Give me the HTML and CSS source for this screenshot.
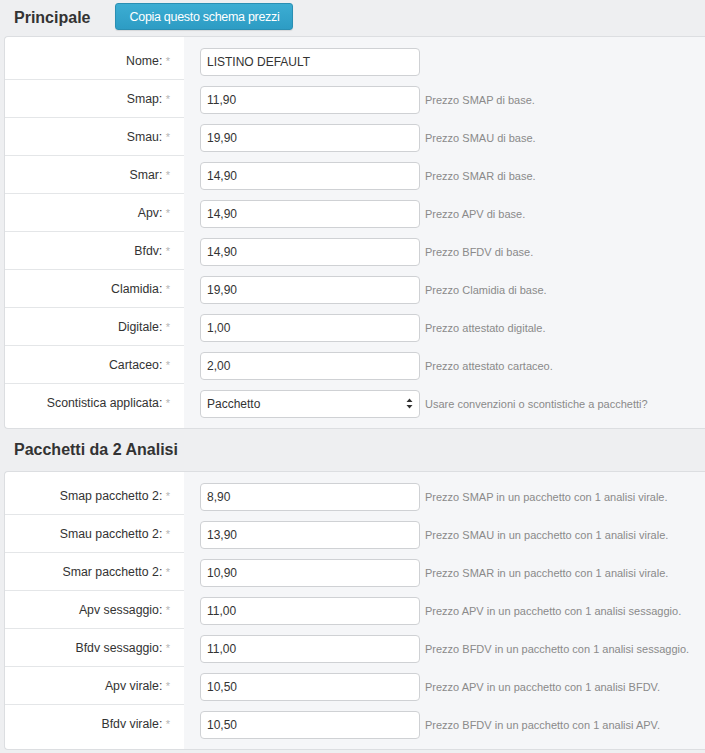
FILE: index.html
```html
<!DOCTYPE html>
<html lang="it">
<head>
<meta charset="utf-8">
<title>Schema prezzi</title>
<link rel="stylesheet" href="styles.css">
</head>
<body>
<div class="section-head">
  <h2>Principale</h2>
  <button class="btn-copy" type="button">Copia questo schema prezzi</button>
</div>
<div class="panel">
  <div class="row"><label class="lbl">Nome: <span class="req">*</span></label><div class="fld"><input class="inp" value="LISTINO DEFAULT"></div></div>
  <div class="row"><label class="lbl">Smap: <span class="req">*</span></label><div class="fld"><input class="inp" value="11,90"><span class="help">Prezzo SMAP di base.</span></div></div>
  <div class="row"><label class="lbl">Smau: <span class="req">*</span></label><div class="fld"><input class="inp" value="19,90"><span class="help">Prezzo SMAU di base.</span></div></div>
  <div class="row"><label class="lbl">Smar: <span class="req">*</span></label><div class="fld"><input class="inp" value="14,90"><span class="help">Prezzo SMAR di base.</span></div></div>
  <div class="row"><label class="lbl">Apv: <span class="req">*</span></label><div class="fld"><input class="inp" value="14,90"><span class="help">Prezzo APV di base.</span></div></div>
  <div class="row"><label class="lbl">Bfdv: <span class="req">*</span></label><div class="fld"><input class="inp" value="14,90"><span class="help">Prezzo BFDV di base.</span></div></div>
  <div class="row"><label class="lbl">Clamidia: <span class="req">*</span></label><div class="fld"><input class="inp" value="19,90"><span class="help">Prezzo Clamidia di base.</span></div></div>
  <div class="row"><label class="lbl">Digitale: <span class="req">*</span></label><div class="fld"><input class="inp" value="1,00"><span class="help">Prezzo attestato digitale.</span></div></div>
  <div class="row"><label class="lbl">Cartaceo: <span class="req">*</span></label><div class="fld"><input class="inp" value="2,00"><span class="help">Prezzo attestato cartaceo.</span></div></div>
  <div class="row"><label class="lbl">Scontistica applicata: <span class="req">*</span></label><div class="fld"><div class="sel"><span>Pacchetto</span><svg class="arrows" width="7" height="11" viewBox="0 0 7 11"><path d="M3.5 0.5 L6.5 4 L0.5 4 Z M3.5 10.5 L6.5 7 L0.5 7 Z" fill="#333"/></svg></div><span class="help">Usare convenzioni o scontistiche a pacchetti?</span></div></div>
</div>
<div class="section-head second">
  <h2>Pacchetti da 2 Analisi</h2>
</div>
<div class="panel">
  <div class="row"><label class="lbl">Smap pacchetto 2: <span class="req">*</span></label><div class="fld"><input class="inp" value="8,90"><span class="help">Prezzo SMAP in un pacchetto con 1 analisi virale.</span></div></div>
  <div class="row"><label class="lbl">Smau pacchetto 2: <span class="req">*</span></label><div class="fld"><input class="inp" value="13,90"><span class="help">Prezzo SMAU in un pacchetto con 1 analisi virale.</span></div></div>
  <div class="row"><label class="lbl">Smar pacchetto 2: <span class="req">*</span></label><div class="fld"><input class="inp" value="10,90"><span class="help">Prezzo SMAR in un pacchetto con 1 analisi virale.</span></div></div>
  <div class="row"><label class="lbl">Apv sessaggio: <span class="req">*</span></label><div class="fld"><input class="inp" value="11,00"><span class="help">Prezzo APV in un pacchetto con 1 analisi sessaggio.</span></div></div>
  <div class="row"><label class="lbl">Bfdv sessaggio: <span class="req">*</span></label><div class="fld"><input class="inp" value="11,00"><span class="help">Prezzo BFDV in un pacchetto con 1 analisi sessaggio.</span></div></div>
  <div class="row"><label class="lbl">Apv virale: <span class="req">*</span></label><div class="fld"><input class="inp" value="10,50"><span class="help">Prezzo APV in un pacchetto con 1 analisi BFDV.</span></div></div>
  <div class="row"><label class="lbl">Bfdv virale: <span class="req">*</span></label><div class="fld"><input class="inp" value="10,50"><span class="help">Prezzo BFDV in un pacchetto con 1 analisi APV.</span></div></div>
</div>
</body>
</html>
```
FILE: styles.css
```css
html, body {
  margin: 0;
  padding: 0;
}
body {
  background: #eeeff1;
  font-family: "Liberation Sans", Arial, sans-serif;
  color: #333;
  width: 709px;
  overflow: hidden;
}
.section-head {
  display: flex;
  align-items: center;
  height: 36px;
  padding-left: 14px;
  box-sizing: border-box;
}
.section-head.second {
  height: 42px;
  padding-top: 0;
}
.section-head h2 {
  margin: 0;
  font-size: 16px;
  font-weight: bold;
  color: #333;
}
.btn-copy {
  margin-left: 25px;
  margin-top: -3px;
  width: 178px;
  height: 27px;
  border: 1px solid #2a8fb3;
  border-radius: 3px;
  background: linear-gradient(#3cadd3, #2d9cc4);
  color: #fff;
  font-family: "Liberation Sans", Arial, sans-serif;
  font-size: 12.5px;
  letter-spacing: -0.3px;
  padding: 0;
  box-shadow: 0 1px 1px rgba(0,0,0,0.1);
}
.panel {
  margin-left: 4px;
  border: 1px solid #dcdee1;
  border-right: none;
  border-radius: 4px 0 0 4px;
  background: linear-gradient(to right, #fff 0, #fff 179px, #f5f6f8 179px);
  padding: 5px 0 6px;
}
.row {
  display: flex;
  height: 38px;
  box-sizing: border-box;
}
.row:not(:last-child) .lbl {
  border-bottom: 1px solid #e4e6e8;
}
.lbl {
  width: 179px;
  flex: none;
  box-sizing: border-box;
  text-align: right;
  padding-right: 14px;
  font-size: 12.3px;
  line-height: 38px;
  color: #333;
}
.req {
  color: #b5b5b5;
  font-size: 11px;
}
.fld {
  display: flex;
  align-items: center;
  padding-left: 16px;
  padding-top: 1px;
}
.inp, .sel {
  width: 220px;
  height: 28px;
  box-sizing: border-box;
  border: 1px solid #cfd1d4;
  border-radius: 4px;
  background: #fff;
  font-family: "Liberation Sans", Arial, sans-serif;
  font-size: 12px;
  color: #333;
  padding: 0 6px;
  margin: 0;
  outline: none;
  flex: none;
}
.sel {
  display: flex;
  align-items: center;
  justify-content: space-between;
  padding-right: 6px;
}
.arrows {
  display: block;
}
.help {
  margin-left: 5px;
  font-size: 11px;
  color: #8a8a8a;
  white-space: nowrap;
}
```
